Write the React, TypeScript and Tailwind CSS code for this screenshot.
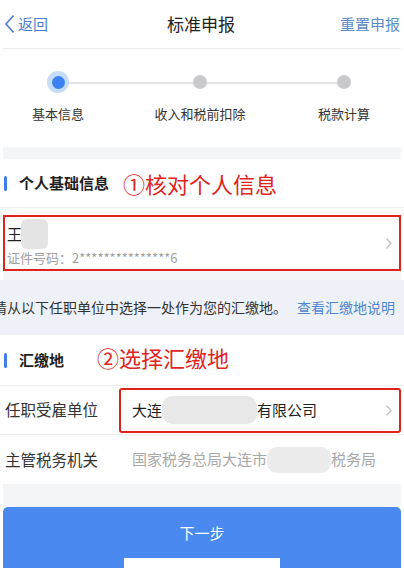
import React from "react";

const font = { fontFamily: '"Noto Sans CJK SC", "Noto Sans", sans-serif' };

function Chevron() {
  return (
    <svg width="8" height="13" viewBox="0 0 8 13" className="shrink-0">
      <path d="M1.5 1.5 L6 6.5 L1.5 11.5" fill="none" stroke="#c4c4c4" strokeWidth="1.4" />
    </svg>
  );
}

function SectionTitle({ title, note, noteClass }: { title: string; note: string; noteClass: string }) {
  return (
    <div className="flex items-center h-full">
      <span className="ml-[4px] w-[3px] h-[15px] rounded-full bg-[#3f7ee8]" />
      <span className="ml-[12px] text-[15px] font-bold text-[#1f1f1f]">{title}</span>
      <span className={`text-[22px] text-[#e0231d] leading-none ${noteClass}`}>{note}</span>
    </div>
  );
}

function Step({ label, active, className }: { label: string; active?: boolean; className: string }) {
  return (
    <div className={`w-[116px] flex flex-col items-center ${className}`}>
      <div
        className={`w-[22px] h-[22px] rounded-full flex items-center justify-center relative ${
          active ? "bg-[#c6dcfb]" : ""
        }`}
      >
        <div className={`rounded-full ${active ? "w-[13px] h-[13px] bg-[#3b82f0]" : "w-[14px] h-[14px] bg-[#c9c9cd]"}`} />
      </div>
      <span className="mt-[11px] text-[13px] text-[#333] whitespace-nowrap">{label}</span>
    </div>
  );
}

export default function App() {
  return (
    <div className="w-[404px] h-[574px] bg-white overflow-hidden relative" style={font}>
      {/* header */}
      <div className="h-[48px] flex items-center justify-between px-[4px]">
        <div className="flex items-center gap-[3px] text-[15px] text-[#4a7fcf]">
          <svg width="11" height="20" viewBox="0 0 11 20">
            <path d="M9.5 1.5 L2 10 L9.5 18.5" fill="none" stroke="#4a7fcf" strokeWidth="1.6" />
          </svg>
          <span>返回</span>
        </div>
        <div className="text-[17px] text-[#222] pl-[14px]">标准申报</div>
        <div className="text-[15px] text-[#5a8cc8]">重置申报</div>
      </div>
      <div className="mx-[3px] h-px bg-[#ececec]" />

      {/* steps */}
      <div className="relative h-[98px]">
        <div className="absolute left-[66px] right-[60px] top-[33px] h-[2px] bg-[#e3e3e6]" />
        <div className="flex pt-[22px]">
          <Step label="基本信息" active className="" />
          <Step label="收入和税前扣除" className="ml-[26px]" />
          <Step label="税款计算" className="ml-[28px]" />
        </div>
      </div>

      <div className="mx-[3px] h-[12px] bg-[#f4f5f7]" />

      {/* personal info */}
      <div className="h-[49px] border-b border-[#efefef]">
        <SectionTitle title="个人基础信息" note="①核对个人信息" noteClass="ml-[14px]" />
      </div>
      <div className="mx-[3px] mt-[7px] h-[56px] border-2 border-[#e0231d] flex items-center pr-[6px]">
        <div className="flex-1 flex flex-col pl-[2px]">
          <div className="flex items-center h-[30px]">
            <span className="text-[15px] text-[#222]">王</span>
            <span className="-ml-[1px] w-[27px] h-[30px] rounded-[6px] bg-[#e4e4e4]" />
          </div>
          <span className="text-[13px] text-[#a0a0a0] leading-[18px]">证件号码：2***************6</span>
        </div>
        <Chevron />
      </div>

      <div className="mx-[3px] h-[9px] bg-[#f4f5f7]" />
      <div className="h-[55px] bg-[#eef2f8] flex items-center text-[14px] whitespace-nowrap">
        <span className="-ml-[7px] text-[#333]">请从以下任职单位中选择一处作为您的汇缴地。</span>
        <span className="ml-[10px] text-[#4f86d0]">查看汇缴地说明</span>
      </div>

      {/* tax location */}
      <div className="h-[51px] border-b border-[#efefef]">
        <SectionTitle title="汇缴地" note="②选择汇缴地" noteClass="ml-[33px] -mt-[6px]" />
      </div>
      <div className="h-[49px] flex items-center border-b border-[#efefef]">
        <span className="ml-[5px] w-[114px] text-[15.5px] text-[#333]">任职受雇单位</span>
        <div className="flex-1 mr-[3px] h-[45px] border-2 border-[#e0231d] rounded-[3px] flex items-center pl-[11px] pr-[6px]">
          <span className="text-[15px] text-[#1f1f1f]">大连</span>
          <span className="w-[95px] h-[28px] rounded-[10px] bg-[#e8e8e8]" />
          <span className="text-[15px] text-[#1f1f1f] flex-1">有限公司</span>
          <Chevron />
        </div>
      </div>
      <div className="h-[49px] flex items-center">
        <span className="ml-[5px] w-[127px] text-[15.5px] text-[#333]">主管税务机关</span>
        <span className="text-[15px] text-[#a8a8a8]">国家税务总局大连市</span>
        <span className="w-[64px] h-[26px] rounded-[10px] bg-[#ececec]" />
        <span className="text-[15px] text-[#a8a8a8]">税务局</span>
      </div>

      <div className="mx-[3px] h-[23px] bg-[#f4f5f7]" />
      <div className="mx-[3px] h-[61px] bg-[#4a8af0] rounded-t-[5px] flex items-center justify-center relative">
        <span className="text-[15px] text-white -mt-[8px]">下一步</span>
        <div className="absolute left-[121px] bottom-0 w-[156px] h-[10px] bg-white" />
      </div>
    </div>
  );
}
